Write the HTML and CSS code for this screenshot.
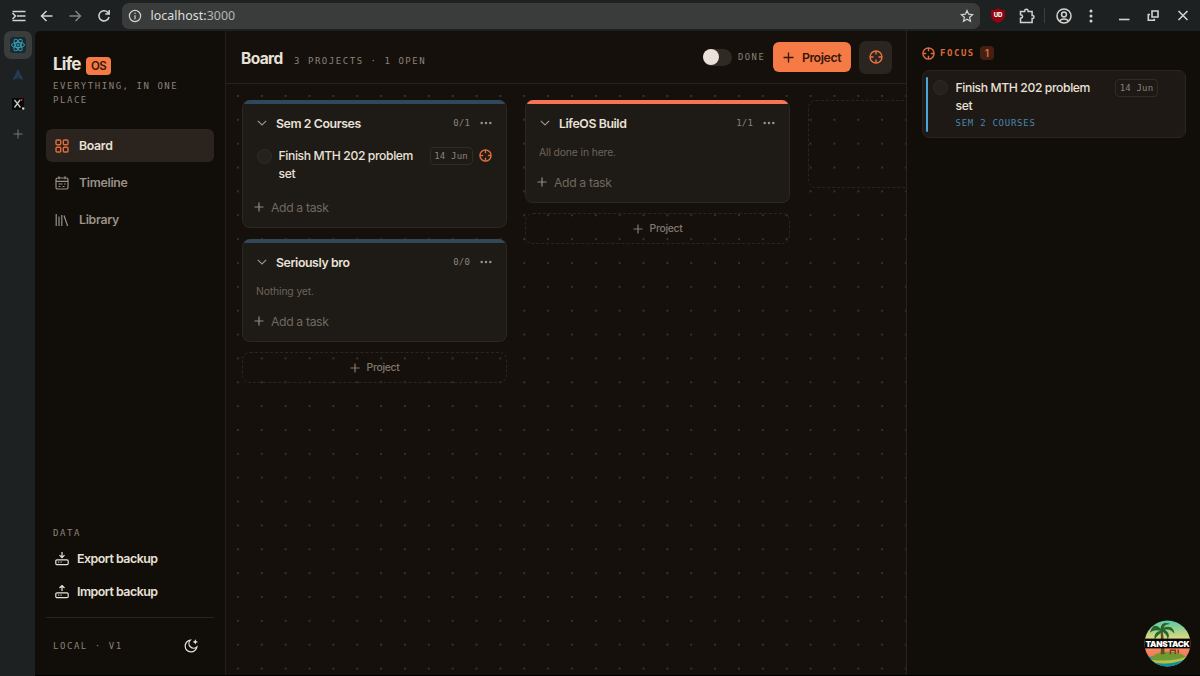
FILE: index.html
```html
<!DOCTYPE html>
<html lang="en">
<head>
    <meta charset="UTF-8">
    <meta name="viewport" content="width=device-width, initial-scale=1.0">
    <title>LifeOS</title>
    <link rel="stylesheet" href="styles.css">
</head>
<body>
    <!-- shared icons -->
    <svg class="defs" width="0" height="0">
        <symbol id="target" viewBox="0 0 14 14">
            <circle cx="7" cy="7" r="6"/>
            <path d="M7 1v3.500M7 9.500V13M1 7h3.500M9.500 7H13"/>
        </symbol>
        <symbol id="plus" viewBox="0 0 10 10"><path d="M5 .5v9M.5 5h9"/></symbol>
        <symbol id="chevron" viewBox="0 0 10 6"><path d="M.8 .8L5 5l4.200-4.200"/></symbol>
        <symbol id="dots" viewBox="0 0 12 4">
            <circle cx="1.700" cy="2" r="1.250"/><circle cx="6" cy="2" r="1.250"/><circle cx="10.300" cy="2" r="1.250"/>
        </symbol>
    </svg>

    <div class="browser">
        <svg class="b-icon menu" viewBox="0 0 16 16"><path d="M1.500 5l3 3-3 3M1.500 3.500h13M6 8h8.500M1.500 12.500h13"/></svg>
        <svg class="b-icon back" viewBox="0 0 16 16"><path d="M13.500 8H3M7.500 3L2.500 8l5 5"/></svg>
        <svg class="b-icon forward" viewBox="0 0 16 16"><path d="M2.500 8H13M8.500 3l5 5-5 5"/></svg>
        <svg class="b-icon reload" viewBox="0 0 16 16"><path d="M13 9a5.100 5.100 0 1 1-1.300-4.700L13.200 5.800M13.200 2v4H9.300"/></svg>
        <div class="address">
            <svg class="info" viewBox="0 0 14 14"><circle cx="7" cy="7" r="5.600"/><path d="M7 6.300v4M7 3.700v1.400"/></svg>
            <span class="url">localhost:<span class="port">3000</span></span>
            <svg class="star" viewBox="0 0 14 14"><path d="M7 1.500l1.600 3.700 4 .4-3 2.700.9 4L7 10.200l-3.500 2.100.9-4-3-2.700 4-.4z"/></svg>
        </div>
        <div class="shield">
            <svg viewBox="0 0 14 15"><path d="M7 0c2 1.400 4 2 7 2v5c0 4-3 6.500-7 8-4-1.500-7-4-7-8V2c3 0 5-.6 7-2z"/></svg>
            <span>UD</span>
        </div>
        <svg class="b-icon puzzle" viewBox="0 0 16 16"><path d="M1.500 3.400h4.200V3a1.700 1.700 0 0 1 3.400 0v.4h4v4h.4a1.500 1.500 0 0 1 0 3h-.4v4H1.500v-4.200c2.800-.4 2.800-3 0-3.400z"/></svg>
        <span class="b-divider"></span>
        <svg class="b-icon user" viewBox="0 0 16 16"><circle cx="8" cy="8" r="7"/><circle cx="8" cy="6.500" r="2.400"/><path d="M3.300 13c2.300-2.800 7.100-2.800 9.400 0"/></svg>
        <svg class="kebab" viewBox="0 0 4 14"><circle cx="2" cy="2" r="1.500"/><circle cx="2" cy="7" r="1.500"/><circle cx="2" cy="12" r="1.500"/></svg>
        <svg class="win minimize" viewBox="0 0 12 12"><path d="M1 9.500h10.500"/></svg>
        <svg class="win restore" viewBox="0 0 12 12"><path d="M5 1h6v6H5zM3 4.500H1.300v5.700h6V8.800"/></svg>
        <svg class="win close" viewBox="0 0 12 12"><path d="M1.500 1l9 9M10.500 1l-9 9"/></svg>
    </div>

    <div class="window">
        <div class="tabs">
            <div class="tab active">
                <svg class="react" viewBox="0 0 16 16">
                    <ellipse cx="8" cy="8" rx="6.500" ry="2.600"/>
                    <ellipse cx="8" cy="8" rx="6.500" ry="2.600" transform="rotate(60 8 8)"/>
                    <ellipse cx="8" cy="8" rx="6.500" ry="2.600" transform="rotate(120 8 8)"/>
                    <circle cx="8" cy="8" r="1"/>
                </svg>
            </div>
            <div class="tab"><svg class="sail" viewBox="0 0 12 12"><path d="M6 0l5.500 11L6 9 .5 11z"/><path class="mast" d="M6 7v4"/></svg></div>
            <div class="tab"><svg class="xtab" viewBox="0 0 14 14"><rect width="12" height="12" x="1" y="1"/><path d="M3.500 3l6 7.500M9 3l-5.500 7.500"/><circle class="red" cx="10.500" cy="3" r="1.100"/><circle class="white" cx="12.200" cy="11.500" r="1.200"/></svg></div>
            <div class="tab"><svg class="new-tab"><use href="#plus"/></svg></div>
        </div>

        <div class="app">
            <aside class="sidebar">
                <div class="brand"><span class="brand-name">Life</span><span class="brand-os">OS</span></div>
                <p class="tagline">EVERYTHING, IN ONE PLACE</p>

                <nav class="nav">
                    <a class="nav-item active">
                        <svg viewBox="0 0 14 14"><rect x="1" y="1" width="4.700" height="4.700" rx="1"/><rect x="8.300" y="1" width="4.700" height="4.700" rx="1"/><rect x="1" y="8.300" width="4.700" height="4.700" rx="1"/><rect x="8.300" y="8.300" width="4.700" height="4.700" rx="1"/></svg>
                        <span>Board</span>
                    </a>
                    <a class="nav-item">
                        <svg viewBox="0 0 14 14"><rect x="1" y="2" width="12" height="11" rx="1.600"/><path d="M4 .3v3M10 .3v3M1 5.300h12M3.500 8h4M9 8h1.500M3.500 10.500h2M7.500 10.500h2"/></svg>
                        <span>Timeline</span>
                    </a>
                    <a class="nav-item">
                        <svg viewBox="0 0 14 14"><path d="M1.200 1v12M4 3.500V13M6.800 2V13M9 2.500l3.600 10.500"/></svg>
                        <span>Library</span>
                    </a>
                </nav>

                <div class="data">
                    <h4 class="data-title">DATA</h4>
                    <a class="data-item">
                        <svg viewBox="0 0 14 14"><rect x=".8" y="7.800" width="12.400" height="4.800" rx="1.200"/><path d="M7 0v5.500M4.500 3.200L7 5.700l2.500-2.500M3.200 10.200h1M5.600 10.200h1"/></svg>
                        <span>Export backup</span>
                    </a>
                    <a class="data-item">
                        <svg viewBox="0 0 14 14"><rect x=".8" y="7.800" width="12.400" height="4.800" rx="1.200"/><path d="M7 6V.5M4.500 3L7 .5 9.500 3M3.200 10.200h1M5.600 10.200h1"/></svg>
                        <span>Import backup</span>
                    </a>
                </div>

                <div class="side-footer">
                    <span>LOCAL · V1</span>
                    <svg viewBox="0 0 14 14"><path d="M6.300 1.200a5.900 5.900 0 1 0 6.600 6.600A4.300 4.300 0 0 1 6.300 1.200z"/><path class="spark" d="M11.300.2l.8 1.900 1.900.8-1.900.8-.8 1.900-.8-1.900-1.900-.8 1.900-.8z"/></svg>
                </div>
            </aside>

            <main class="main">
                <header class="topbar">
                    <h1>Board</h1>
                    <span class="summary">3 PROJECTS · 1 OPEN</span>
                    <span class="switch"></span>
                    <span class="done">DONE</span>
                    <button class="add-project"><svg><use href="#plus"/></svg><span>Project</span></button>
                    <button class="focus-toggle"><svg><use href="#target"/></svg></button>
                </header>

                <div class="board">
                    <div class="column">
                        <section class="card">
                            <div class="card-head">
                                <svg class="chevron"><use href="#chevron"/></svg>
                                <h2>Sem 2 Courses</h2>
                                <span class="count">0/1</span>
                                <svg class="dots"><use href="#dots"/></svg>
                            </div>
                            <div class="task">
                                <span class="check"></span>
                                <p class="task-title">Finish MTH 202 problem set</p>
                                <span class="date">14 Jun</span>
                                <svg class="target"><use href="#target"/></svg>
                            </div>
                            <div class="add-task"><svg><use href="#plus"/></svg><span>Add a task</span></div>
                        </section>
                        <section class="card last">
                            <div class="card-head">
                                <svg class="chevron"><use href="#chevron"/></svg>
                                <h2>Seriously bro</h2>
                                <span class="count">0/0</span>
                                <svg class="dots"><use href="#dots"/></svg>
                            </div>
                            <p class="empty">Nothing yet.</p>
                            <div class="add-task"><svg><use href="#plus"/></svg><span>Add a task</span></div>
                        </section>
                        <div class="add-card"><svg><use href="#plus"/></svg><span>Project</span></div>
                    </div>

                    <div class="column">
                        <section class="card orange last">
                            <div class="card-head">
                                <svg class="chevron"><use href="#chevron"/></svg>
                                <h2>LifeOS Build</h2>
                                <span class="count">1/1</span>
                                <svg class="dots"><use href="#dots"/></svg>
                            </div>
                            <p class="empty">All done in here.</p>
                            <div class="add-task"><svg><use href="#plus"/></svg><span>Add a task</span></div>
                        </section>
                        <div class="add-card"><svg><use href="#plus"/></svg><span>Project</span></div>
                    </div>

                    <div class="column"><div class="drop-zone"></div></div>
                </div>
            </main>

            <aside class="focus">
                <div class="focus-head">
                    <svg><use href="#target"/></svg>
                    <span class="focus-title">FOCUS</span>
                    <span class="focus-count">1</span>
                </div>
                <div class="focus-card">
                    <span class="bar"></span>
                    <span class="check"></span>
                    <div class="focus-body">
                        <p class="task-title">Finish MTH 202 problem set</p>
                        <span class="project">SEM 2 COURSES</span>
                    </div>
                    <span class="date">14 Jun</span>
                </div>
            </aside>
        </div>
    </div>

    <!-- devtools badge -->
    <div class="tanstack">
        <svg viewBox="0 0 48 48">
            <defs>
                <linearGradient id="sky" x1="0" y1="0" x2="0" y2="1">
                    <stop offset="0" stop-color="#55c9a5"/>
                    <stop offset=".4" stop-color="#e2d77d"/>
                    <stop offset=".6" stop-color="#f58a62"/>
                    <stop offset="1" stop-color="#ee6656"/>
                </linearGradient>
                <clipPath id="round"><circle cx="24" cy="24" r="23.500"/></clipPath>
            </defs>
            <g clip-path="url(#round)">
                <rect width="48" height="48" fill="url(#sky)"/>
                <path d="M0 39c10-3 35-4 48 0v9H0z" fill="#159a94"/>
                <path d="M7 39c5-8 26-9 35-2-3 5-28 8-35 2z" fill="#6f9a31"/>
                <path d="M3 39c8 4 29 3 41-2-4 6-14 8-21 8-8 0-15-2-20-6z" fill="#b9bd49"/>
                <path d="M2 41c9 5 29 5 42-2l-4 9H9z" fill="#128f9a"/>
                <path d="M17 10c0 8 1 15 0 25h4c0-9-1-17-2-25z" fill="#6b4b22"/>
                <path d="M17 9C12 3 8 6 6 13c4-3 7-3 11-2-5 1-7 4-6 9 2-4 5-6 8-8 3 2 5 4 5 8 3-4 1-8-3-10 4-1 7 0 10 4 0-6-5-9-11-6 1-3 4-4 7-4-5-2-10-1-10 5z" fill="#24652c"/>
                <path d="M27 35v-4h5v4M35 34v-4" stroke="#8a3328" stroke-width="1.500" fill="none"/>
                <rect y="19" width="48" height="10" fill="#050505"/>
            </g>
        </svg>
        <span>TANSTACK</span>
    </div>
</body>
</html>
```
FILE: styles.css
```css
* {
    box-sizing: border-box;
}
body {
    margin: 0;
    width: 1200px;
    height: 676px;
    overflow: hidden;
    display: flex;
    flex-direction: column;
    background: #1e2121;
    color: #e9e1d8;
    font-family: Inter, "Liberation Sans", sans-serif;
}
h1, h2, h4, p {
    margin: 0;
}
svg {
    fill: none;
    stroke: currentColor;
    stroke-width: 1.2;
    flex: none;
}
.defs {
    position: absolute;
}

/* browser bar */
.browser {
    height: 31px;
    flex: none;
    display: flex;
    align-items: center;
    color: #d2d3d3;
}
.b-icon {
    width: 16px;
    height: 16px;
    stroke-width: 1.5;
}
.menu { margin-left: 11px; }
.back { margin-left: 12px; }
.forward {
    margin-left: 12px;
    color: #7f8282;
}
.reload { margin-left: 13px; }
.address {
    margin-left: 10px;
    width: 858px;
    height: 26px;
    border-radius: 7px;
    background: #3a3c3c;
    display: flex;
    align-items: center;
    padding: 0 6px;
}
.info {
    width: 14px;
    height: 14px;
}
.url {
    margin-left: 8.5px;
    flex: 1;
    font-family: "Noto Sans", sans-serif;
    font-size: 12.4px;
    letter-spacing: 0.05px;
    color: #dededc;
}
.port { color: #b5b6b5; }
.star {
    width: 14px;
    height: 14px;
}
.shield {
    position: relative;
    margin-left: 11px;
    width: 14px;
    height: 15px;
    display: flex;
}
.shield svg {
    width: 14px;
    height: 15px;
    fill: #8f0610;
    stroke: none;
}
.shield span {
    position: absolute;
    left: 0;
    top: 3px;
    width: 14px;
    text-align: center;
    color: #fff;
    font-size: 6px;
    font-weight: 800;
    line-height: 8px;
}
.puzzle { margin-left: 14px; }
.b-divider {
    margin-left: 9px;
    width: 1px;
    height: 15px;
    background: #3b3e3e;
}
.user { margin-left: 11px; }
.kebab {
    margin-left: 17px;
    width: 4px;
    height: 14px;
    fill: currentColor;
    stroke: none;
}
.win {
    width: 12px;
    height: 12px;
    stroke-width: 1.6;
}
.minimize { margin-left: 25px; }
.restore { margin-left: 17px; }
.close { margin-left: 18px; }

/* vertical tabs */
.window {
    flex: 1;
    display: flex;
    min-height: 0;
}
.tabs {
    width: 35px;
    display: flex;
    flex-direction: column;
    align-items: center;
    gap: 1.5px;
}
.tab {
    width: 28px;
    height: 28px;
    border-radius: 7px;
    display: flex;
    align-items: center;
    justify-content: center;
}
.tab.active { background: #3b3d3d; }
.react {
    width: 16px;
    height: 16px;
    color: #3da4bd;
    background: #152a31;
    border-radius: 3px;
    stroke-width: 0.9;
}
.sail {
    width: 12px;
    height: 12px;
    fill: #233d54;
    stroke: none;
}
.mast { stroke: #1e2b36; }
.xtab {
    width: 14px;
    height: 14px;
    color: #c8c8c8;
    stroke-width: 1.3;
}
.xtab rect {
    fill: #080808;
    stroke: none;
}
.red { fill: #d93040; stroke: none; }
.white { fill: #ddd; stroke: none; }
.new-tab {
    width: 10px;
    height: 10px;
    color: #777a7a;
    stroke-width: 1;
}

/* app */
.app {
    flex: 1;
    display: flex;
    min-width: 0;
    border-top-left-radius: 5px;
    overflow: hidden;
    background: #110d09;
    border-bottom: 1px solid #000;
}
.sidebar {
    width: 191px;
    flex: none;
    display: flex;
    flex-direction: column;
    padding: 21px 11px 0;
    border-right: 1px solid #25201a;
}
.brand {
    height: 24px;
    padding-left: 7px;
    display: flex;
    align-items: center;
}
.brand-name {
    width: 33px;
    font-size: 17px;
    font-weight: 700;
    letter-spacing: -0.75px;
    line-height: 20px;
}
.brand-os {
    margin-top: 4px;
    width: 25px;
    height: 18px;
    border-radius: 4px;
    background: #f67a45;
    color: #35170a;
    font-size: 11.5px;
    font-weight: 600;
    letter-spacing: -0.6px;
    line-height: 18px;
    text-align: center;
}
.tagline, .summary, .data-title, .side-footer, .done, .focus-title, .project, .count, .date {
    font-family: "DejaVu Sans Mono", "Liberation Mono", monospace;
    font-weight: 400;
    font-size: 9px;
    letter-spacing: 1.54px;
    color: #8c8279;
    white-space: nowrap;
}
.tagline {
    margin-top: 4px;
    padding-left: 7px;
    line-height: 13.5px;
    white-space: normal;
}
.nav {
    margin-top: 22px;
    display: flex;
    flex-direction: column;
    gap: 4px;
}
.nav-item {
    height: 33px;
    border-radius: 6px;
    padding-left: 9px;
    display: flex;
    align-items: center;
    gap: 10px;
    color: #9a9188;
    font-size: 12.3px;
    font-weight: 600;
    letter-spacing: -0.3px;
}
.nav-item svg, .data-item svg, .side-footer svg {
    width: 14px;
    height: 14px;
}
.nav-item.active {
    background: #2b231d;
    color: #e9e1d8;
}
.nav-item.active svg {
    color: #df6c3f;
    stroke-width: 1.4;
}
.data {
    margin-top: auto;
    display: flex;
    flex-direction: column;
    padding-left: 7px;
}
.data-title { line-height: 14px; }
.data-item {
    height: 33px;
    padding-left: 2px;
    display: flex;
    align-items: center;
    gap: 8px;
    font-size: 12.4px;
    font-weight: 600;
    letter-spacing: -0.5px;
}
.data-title + .data-item { margin-top: 2px; }
.side-footer {
    margin-top: 9px;
    border-top: 1px solid #29241e;
    height: 58px;
    padding: 0 16.5px 2px 7px;
    display: flex;
    align-items: center;
    justify-content: space-between;
}
.side-footer svg {
    color: #e9e1d8;
}
.spark {
    fill: currentColor;
    stroke: none;
}

/* main */
.main {
    width: 681px;
    flex: none;
    display: flex;
    flex-direction: column;
    border-right: 1px solid #28231d;
    background: #15100c;
}
.topbar {
    height: 53px;
    flex: none;
    border-bottom: 1px solid #28221c;
    display: flex;
    align-items: center;
    padding: 0 14px 0 15px;
}
h1 {
    width: 53px;
    margin-top: 2px;
    font-size: 15.5px;
    font-weight: 700;
    letter-spacing: -0.6px;
}
.summary {
    flex: 1;
    margin-top: 7px;
}
.switch {
    width: 29px;
    height: 17px;
    border-radius: 9px;
    background: #302a25;
    display: flex;
    align-items: center;
}
.switch::before {
    content: "";
    width: 16px;
    height: 16px;
    border-radius: 50%;
    background: #eae2da;
}
.done {
    margin-left: 6px;
    width: 35px;
    font-size: 8.8px;
    letter-spacing: 1.5px;
}
button {
    border: 0;
    padding: 0;
    font-family: inherit;
    display: flex;
    align-items: center;
    justify-content: center;
}
.add-project {
    width: 78px;
    height: 30px;
    border-radius: 6px;
    background: #f67a45;
    color: #35170a;
    font-size: 12.3px;
    font-weight: 600;
    letter-spacing: -0.4px;
    gap: 8px;
}
.add-project svg, .add-task svg, .add-card svg {
    width: 10px;
    height: 10px;
}
.add-project svg { width: 11px; height: 11px; }
.focus-toggle {
    margin-left: 8px;
    width: 33px;
    height: 33px;
    border-radius: 7px;
    background: #2b2520;
    color: #ed7040;
}
.focus-toggle svg {
    width: 14px;
    height: 14px;
    stroke-width: 1.4;
}
.target, .focus-head svg {
    width: 13px;
    height: 13px;
    stroke-width: 1.5;
}
.board {
    flex: 1;
    overflow: hidden;
    padding: 16px 0 0 16px;
    display: flex;
    align-items: flex-start;
    gap: 18px;
    background-image: radial-gradient(circle, #37312b 0.8px, transparent 1.4px);
    background-size: 23.87px 23.87px;
}
.column {
    width: 265px;
    flex: none;
    display: flex;
    flex-direction: column;
}
.card {
    margin-bottom: 11px;
    border: 1px solid #2b2721;
    border-top: 0;
    border-radius: 8px;
    overflow: hidden;
    background: #1e1a15;
    padding: 0 14px 9px 12.5px;
    display: flex;
    flex-direction: column;
}
.card.last { margin-bottom: 10px; }
.card::before {
    content: "";
    height: 4px;
    margin: 0 -14px 7px;
    background: #31485a;
}
.card.orange::before { background: #f67353; }
.card-head {
    height: 24px;
    display: flex;
    align-items: center;
    padding-left: 1px;
}
.chevron {
    width: 10px;
    height: 6px;
    color: #9a9086;
}
h2 {
    flex: 1;
    margin-left: 9.5px;
    font-size: 12.3px;
    font-weight: 600;
    letter-spacing: -0.4px;
}
.count, .date {
    font-size: 9px;
    letter-spacing: 0.2px;
}
.dots {
    margin-left: 10px;
    width: 12px;
    height: 4px;
    fill: #9a9086;
    stroke: none;
}
.task {
    display: flex;
    align-items: flex-start;
    margin-top: 12px;
}
.check {
    width: 15px;
    height: 15px;
    margin-top: 2px;
    border: 1px solid #302b26;
    border-radius: 50%;
    background: #25211c;
    flex: none;
}
.task-title {
    width: 140px;
    font-size: 12.2px;
    font-weight: 500;
    line-height: 17.6px;
    letter-spacing: -0.4px;
}
.task .check { margin-left: 1px; }
.task .task-title { margin-left: 7px; }
.date {
    width: 43px;
    height: 18px;
    border: 1px solid #302b25;
    border-radius: 4px;
    text-align: center;
    line-height: 16px;
}
.task .date { margin-left: 12px; }
.target {
    margin: 2px 0 0 6.5px;
    color: #df6c3f;
}
.add-task {
    display: flex;
    align-items: center;
    gap: 7px;
    margin: 13px 0 -1px -1.5px;
    height: 24px;
    color: #71685f;
    font-size: 12.2px;
    letter-spacing: -0.35px;
}
.add-task svg { color: #948a80; }
.empty {
    height: 16px;
    margin-top: 9px;
    padding-left: 0.5px;
    color: #6d645b;
    font-size: 10.3px;
    line-height: 16px;
    letter-spacing: -0.1px;
}
.empty + .add-task { margin-top: 10px; }
.add-card {
    height: 31px;
    border: 1px dashed #2b2620;
    border-radius: 8px;
    display: flex;
    align-items: center;
    justify-content: center;
    gap: 7px;
    color: #81786f;
    font-size: 10.4px;
    font-weight: 500;
    letter-spacing: -0.3px;
}
.drop-zone {
    height: 88px;
    border: 1px dashed #29241e;
    border-radius: 8px;
}

/* focus panel */
.focus {
    flex: 1;
    padding: 13px 14px 0 15px;
}
.focus-head {
    height: 18px;
    display: flex;
    align-items: center;
    color: #df6c3f;
}
.focus-title {
    margin-left: 5px;
    color: #d9683c;
    font-weight: 700;
}
.focus-count {
    margin-left: 5px;
    width: 14px;
    height: 14px;
    border-radius: 4px;
    background: #432013;
    font-size: 10px;
    font-weight: 600;
    line-height: 14px;
    text-align: center;
}
.focus-card {
    margin-top: 8px;
    height: 68px;
    border: 1px solid #2a251f;
    border-radius: 7px;
    background: #1e1914;
    padding: 6px 0 0 3px;
    display: flex;
}
.bar {
    width: 2px;
    height: 55px;
    border-radius: 1px;
    background: #4aa5d8;
}
.focus-card .check {
    margin: 3px 0 0 5px;
}
.focus-body {
    margin: 2px 0 0 7.5px;
    width: 159.5px;
    line-height: 17px;
}
.project {
    display: block;
    margin-top: 1px;
    font-size: 9px;
    letter-spacing: 0.74px;
    color: #4588b0;
}
.focus-card .date { margin-top: 2px; }

.tanstack {
    position: absolute;
    left: 1144px;
    top: 620px;
    width: 47px;
    height: 47px;
}
.tanstack svg {
    width: 47px;
    height: 47px;
    stroke: none;
}
.tanstack span {
    position: absolute;
    left: 0;
    top: 18px;
    width: 47px;
    color: #fff;
    font-size: 8.2px;
    font-weight: 900;
    letter-spacing: -0.3px;
    line-height: 12px;
    text-align: center;
}
```
